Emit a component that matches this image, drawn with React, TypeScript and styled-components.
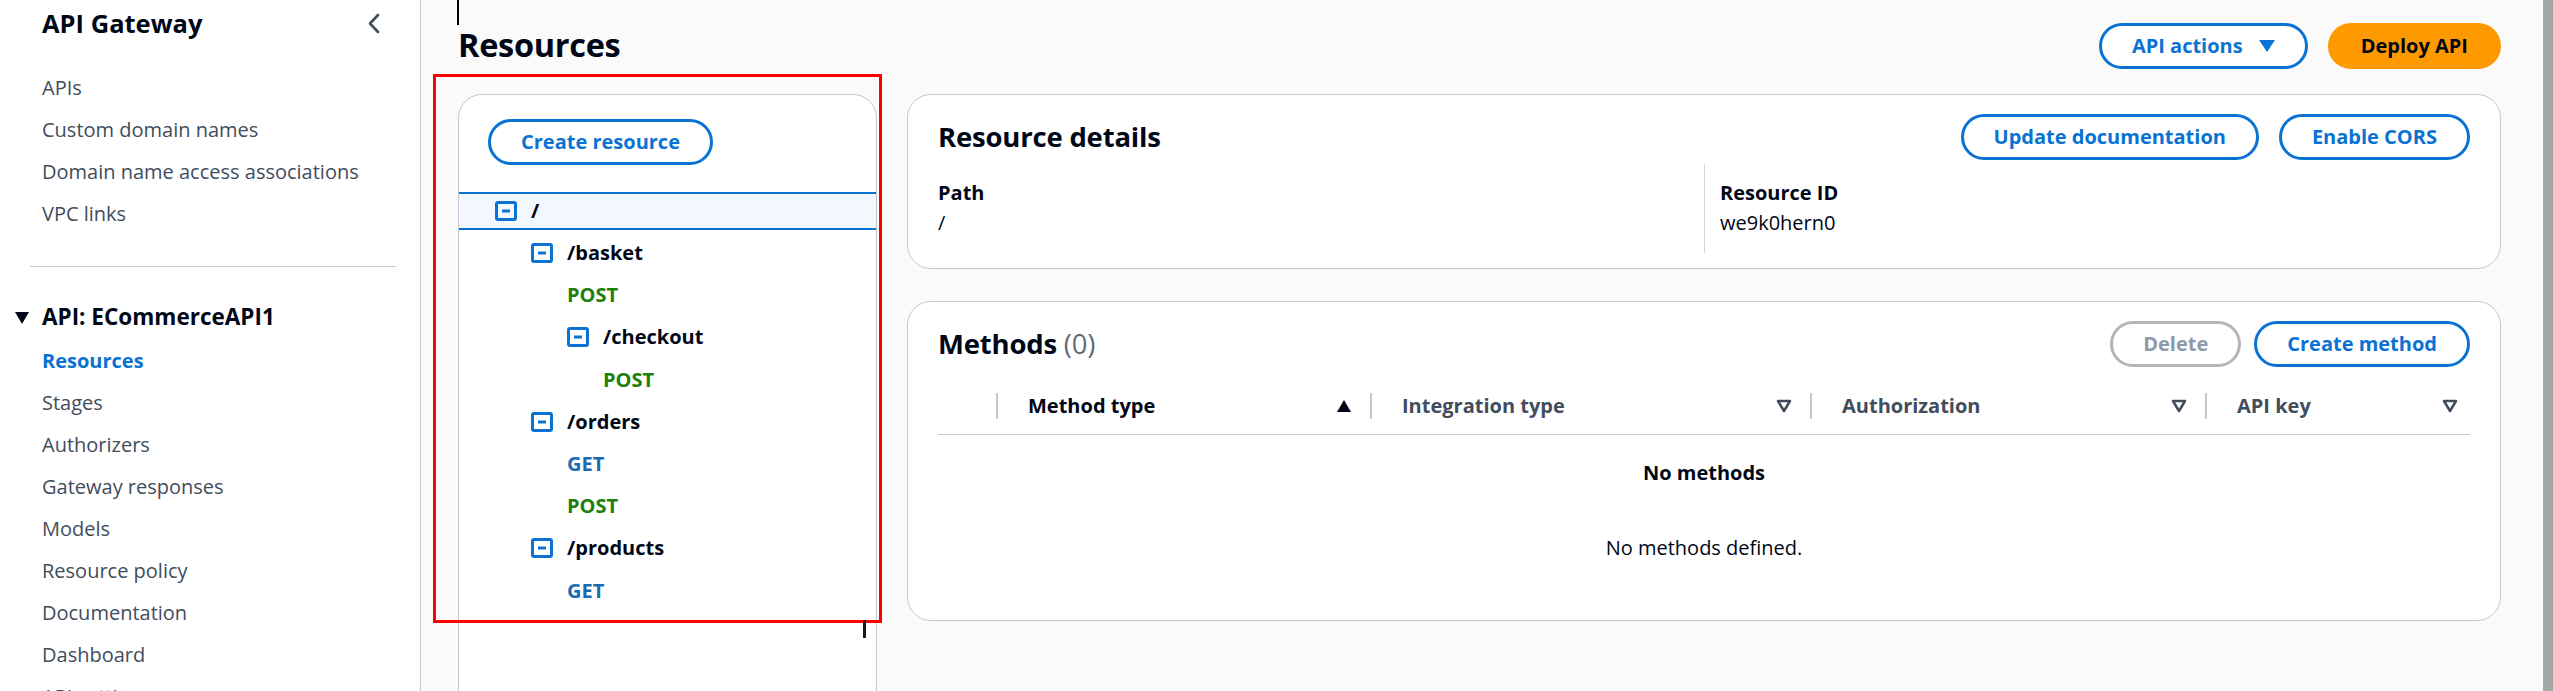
import React from "react";
import styled, { createGlobalStyle, css } from "styled-components";

const GlobalStyle = createGlobalStyle`
  html, body { margin: 0; padding: 0; height: 100%; overflow: hidden; }
  body {
    font-family: "Open Sans", "Noto Sans", Arial, sans-serif;
    color: #000716;
    background: #fafafa;
    font-size: 20px;
    line-height: 30px;
  }
  * { box-sizing: border-box; }
  h1, h2, h3, p { margin: 0; }
  ul { margin: 0; padding: 0; list-style: none; }
`;

const Shell = styled.div`
  display: flex;
  height: 691px;
  overflow: hidden;
`;

/* ---------------- Sidebar ---------------- */
const Sidebar = styled.nav`
  width: 421px;
  flex: none;
  background: #ffffff;
  border-right: 1px solid #c6c6cd;
  padding-top: 7px;
`;

const SideHeader = styled.div`
  display: flex;
  align-items: center;
  justify-content: space-between;
  padding: 0 40px 0 42px;
  height: 33px;
`;

const SideTitle = styled.h2`
  font-size: 25.5px;
  line-height: 33px;
  font-weight: 700;
  color: #000716;
`;

const CloseIcon = styled.svg`
  width: 13px;
  height: 21px;
  display: block;
`;

const NavList = styled.ul<{ $top: number }>`
  margin-top: ${(p) => p.$top}px;
  padding-left: 42px;
`;

const NavItem = styled.li<{ $active?: boolean }>`
  height: 42px;
  padding: 6px 0;
  font-size: 20px;
  line-height: 30px;
  color: ${(p) => (p.$active ? "#0972d3" : "#414d5c")};
  font-weight: ${(p) => (p.$active ? 700 : 400)};
  white-space: nowrap;
`;

const SideDivider = styled.hr`
  margin: 31px 24px 0 30px;
  border: none;
  border-top: 1px solid #c6c6cd;
`;

const SectionHeader = styled.div`
  margin-top: 35px;
  display: flex;
  align-items: center;
  gap: 13px;
  padding-left: 15px;
  font-size: 22.5px;
  line-height: 30px;
  font-weight: 700;
  color: #000716;
`;

const Caret = styled.svg`
  width: 14px;
  height: 12px;
  display: block;
  margin-top: 2px;
`;

/* ---------------- Main ---------------- */
const Main = styled.main`
  flex: 1;
  position: relative;
  padding: 0 42px 0 37px;
  background: #fafafa;
`;

const ScrollTrack = styled.div`
  width: 10px;
  flex: none;
  background: #a6a6a6;
`;

const PageHeader = styled.div`
  display: flex;
  align-items: flex-start;
  justify-content: space-between;
  padding-top: 22px;
  height: 69px;
`;

const PageTitle = styled.h1`
  font-size: 32.5px;
  line-height: 45px;
  font-weight: 700;
  letter-spacing: -0.3px;
`;

const Actions = styled.div<{ $gap: number }>`
  display: flex;
  align-items: center;
  gap: ${(p) => p.$gap}px;
`;

const TopActions = styled(Actions)`
  margin-top: 1px;
`;

type Variant = "normal" | "primary" | "disabled";

const Button = styled.button<{ $variant?: Variant }>`
  font-family: inherit;
  font-size: 20px;
  line-height: 30px;
  font-weight: 700;
  padding: 5px 30px;
  border-radius: 30px;
  border: 3px solid #0972d3;
  background: #ffffff;
  color: #0972d3;
  display: inline-flex;
  align-items: center;
  gap: 16px;
  white-space: nowrap;
  cursor: pointer;
  ${(p) =>
    p.$variant === "primary" &&
    css`
      background: #ff9900;
      border-color: #ff9900;
      color: #000716;
    `}
  ${(p) =>
    p.$variant === "disabled" &&
    css`
      border-color: #b4b4bb;
      color: #8d99a8;
      cursor: default;
    `}
`;

const Layout = styled.div`
  margin-top: 25px;
  display: grid;
  grid-template-columns: 419px 1fr;
  gap: 30px;
  align-items: start;
`;

const Card = styled.section`
  background: #ffffff;
  border: 1px solid #c6c6cd;
  border-radius: 24px;
`;

const TreeCard = styled(Card)`
  min-height: 660px;
  padding: 24px 0 0;
`;

const TreeToolbar = styled.div`
  padding-left: 29px;
  margin-bottom: 26.5px;
`;

const TreeRow = styled.div<{ $indent: number; $selected?: boolean }>`
  height: 42.2px;
  display: flex;
  align-items: center;
  gap: 14px;
  padding-left: ${(p) => 36 * p.$indent}px;
  font-weight: 700;
  font-size: 20px;
  line-height: 30px;
  ${(p) =>
    p.$selected &&
    css`
      height: 38px;
      margin: 2px 0 2.5px;
      background: #f2f8fd;
      border-top: 2px solid #0972d3;
      border-bottom: 2px solid #0972d3;
    `}
`;

const MethodLabel = styled.span<{ $verb: string }>`
  color: ${(p) => (p.$verb === "GET" ? "#1a6bb3" : "#1d7f0c")};
`;

const ExpandIcon = styled.svg`
  width: 22px;
  height: 20px;
  display: block;
  flex: none;
`;

const RightColumn = styled.div`
  display: flex;
  flex-direction: column;
  gap: 32px;
`;

const PanelCard = styled(Card)<{ $bottom: number }>`
  padding: 19px 30px ${(p) => p.$bottom}px;
`;

const PanelHeader = styled.div`
  display: flex;
  align-items: center;
  justify-content: space-between;
  height: 46px;
`;

const PanelTitle = styled.h2`
  font-size: 27.5px;
  line-height: 36px;
  font-weight: 700;
  letter-spacing: -0.2px;
`;

const Counter = styled.span`
  font-weight: 400;
  color: #5f6b7a;
`;

const KeyValues = styled.div`
  margin-top: 4px;
  display: grid;
  grid-template-columns: 1fr 1fr;
`;

const KVColumn = styled.div<{ $divided?: boolean }>`
  padding: 14px 0 15px;
  ${(p) =>
    p.$divided &&
    css`
      border-left: 1px solid #d1d5db;
      padding-left: 15px;
    `}
`;

const KVLabel = styled.div`
  font-weight: 700;
`;

const KVValue = styled.div``;

const TableHead = styled.div`
  margin-top: 11px;
  display: grid;
  grid-template-columns: 58px 374px 440px 395px 1fr;
  border-bottom: 1px solid #c6c6cd;
`;

const HeadCell = styled.div<{ $active?: boolean; $last?: boolean }>`
  position: relative;
  height: 56px;
  display: flex;
  align-items: center;
  justify-content: space-between;
  padding: 0 ${(p) => (p.$last ? 12 : 18)}px 0 32px;
  font-weight: 700;
  color: ${(p) => (p.$active ? "#000716" : "#414d5c")};
  &::before {
    content: "";
    position: absolute;
    left: 0;
    top: 15px;
    width: 2px;
    height: 26px;
    background: #c6c6cd;
  }
`;

const SortIcon = styled.svg`
  width: 16px;
  height: 14px;
  display: block;
`;

const Empty = styled.div`
  text-align: center;
  padding: 23px 0 57px;
`;

const EmptyTitle = styled.div`
  font-weight: 700;
`;

const EmptyText = styled.div`
  margin-top: 45px;
`;

/* overlays */
const Annotation = styled.div`
  position: absolute;
  left: 12px;
  top: 74px;
  width: 449px;
  height: 549px;
  border: 3px solid #ff0000;
  pointer-events: none;
`;

const TextCaret = styled.div`
  position: absolute;
  left: 36px;
  top: 0;
  width: 2px;
  height: 25px;
  background: #000;
`;

const IBeam = styled.div`
  position: absolute;
  left: 442px;
  top: 620px;
  width: 3px;
  height: 18px;
  background: #1a1a1a;
`;

/* ---------------- Icons ---------------- */
const Minus = () => (
  <ExpandIcon viewBox="0 0 22 20">
    <rect x="1.5" y="1.5" width="19" height="17" rx="1.5" fill="none" stroke="#0972d3" strokeWidth="3" />
    <line x1="7" y1="10" x2="15" y2="10" stroke="#0972d3" strokeWidth="3" />
  </ExpandIcon>
);

const SortAsc = () => (
  <SortIcon viewBox="0 0 16 14">
    <polygon points="8,1 15,13 1,13" fill="#000716" />
  </SortIcon>
);

const SortNone = () => (
  <SortIcon viewBox="0 0 16 14">
    <polygon points="2,2 14,2 8,12" fill="none" stroke="#414d5c" strokeWidth="2.5" strokeLinejoin="round" />
  </SortIcon>
);

const DropCaret = () => (
  <SortIcon viewBox="0 0 16 14">
    <polygon points="0,1 16,1 8,13" fill="#0972d3" />
  </SortIcon>
);

type Node = { label: string; indent: number; kind: "res" | "method"; selected?: boolean };

const tree: Node[] = [
  { label: "/", indent: 1, kind: "res", selected: true },
  { label: "/basket", indent: 2, kind: "res" },
  { label: "POST", indent: 3, kind: "method" },
  { label: "/checkout", indent: 3, kind: "res" },
  { label: "POST", indent: 4, kind: "method" },
  { label: "/orders", indent: 2, kind: "res" },
  { label: "GET", indent: 3, kind: "method" },
  { label: "POST", indent: 3, kind: "method" },
  { label: "/products", indent: 2, kind: "res" },
  { label: "GET", indent: 3, kind: "method" },
];

const topLinks = ["APIs", "Custom domain names", "Domain name access associations", "VPC links"];
const apiLinks = [
  "Resources",
  "Stages",
  "Authorizers",
  "Gateway responses",
  "Models",
  "Resource policy",
  "Documentation",
  "Dashboard",
  "API settings",
];

export default function App() {
  return (
    <>
      <GlobalStyle />
      <Shell>
        <Sidebar>
          <SideHeader>
            <SideTitle>API Gateway</SideTitle>
            <CloseIcon viewBox="0 0 13 21">
              <polyline points="11,2 3,10.5 11,19" fill="none" stroke="#414d5c" strokeWidth="2.6" strokeLinecap="round" strokeLinejoin="round" />
            </CloseIcon>
          </SideHeader>
          <NavList $top={27}>
            {topLinks.map((l) => (
              <NavItem key={l}>{l}</NavItem>
            ))}
          </NavList>
          <SideDivider />
          <SectionHeader>
            <Caret viewBox="0 0 14 12">
              <polygon points="0,0 14,0 7,12" fill="#000716" />
            </Caret>
            API: ECommerceAPI1
          </SectionHeader>
          <NavList $top={8}>
            {apiLinks.map((l, i) => (
              <NavItem key={l} $active={i === 0}>
                {l}
              </NavItem>
            ))}
          </NavList>
        </Sidebar>

        <Main>
          <TextCaret />
          <PageHeader>
            <PageTitle>Resources</PageTitle>
            <TopActions $gap={20}>
              <Button>
                API actions
                <DropCaret />
              </Button>
              <Button $variant="primary">Deploy API</Button>
            </TopActions>
          </PageHeader>

          <Layout>
            <TreeCard>
              <TreeToolbar>
                <Button>Create resource</Button>
              </TreeToolbar>
              {tree.map((n, i) => (
                <TreeRow key={i} $indent={n.indent} $selected={n.selected}>
                  {n.kind === "res" ? (
                    <>
                      <Minus />
                      <span>{n.label}</span>
                    </>
                  ) : (
                    <MethodLabel $verb={n.label}>{n.label}</MethodLabel>
                  )}
                </TreeRow>
              ))}
            </TreeCard>

            <RightColumn>
              <PanelCard $bottom={15}>
                <PanelHeader>
                  <PanelTitle>Resource details</PanelTitle>
                  <Actions $gap={20}>
                    <Button>Update documentation</Button>
                    <Button>Enable CORS</Button>
                  </Actions>
                </PanelHeader>
                <KeyValues>
                  <KVColumn>
                    <KVLabel>Path</KVLabel>
                    <KVValue>/</KVValue>
                  </KVColumn>
                  <KVColumn $divided>
                    <KVLabel>Resource ID</KVLabel>
                    <KVValue>we9k0hern0</KVValue>
                  </KVColumn>
                </KeyValues>
              </PanelCard>

              <PanelCard $bottom={0}>
                <PanelHeader>
                  <PanelTitle>
                    Methods <Counter>(0)</Counter>
                  </PanelTitle>
                  <Actions $gap={13}>
                    <Button $variant="disabled">Delete</Button>
                    <Button>Create method</Button>
                  </Actions>
                </PanelHeader>
                <TableHead>
                  <div />
                  <HeadCell $active>
                    Method type
                    <SortAsc />
                  </HeadCell>
                  <HeadCell>
                    Integration type
                    <SortNone />
                  </HeadCell>
                  <HeadCell>
                    Authorization
                    <SortNone />
                  </HeadCell>
                  <HeadCell $last>
                    API key
                    <SortNone />
                  </HeadCell>
                </TableHead>
                <Empty>
                  <EmptyTitle>No methods</EmptyTitle>
                  <EmptyText>No methods defined.</EmptyText>
                </Empty>
              </PanelCard>
            </RightColumn>
          </Layout>

          <Annotation />
          <IBeam />
        </Main>
        <ScrollTrack />
      </Shell>
    </>
  );
}
